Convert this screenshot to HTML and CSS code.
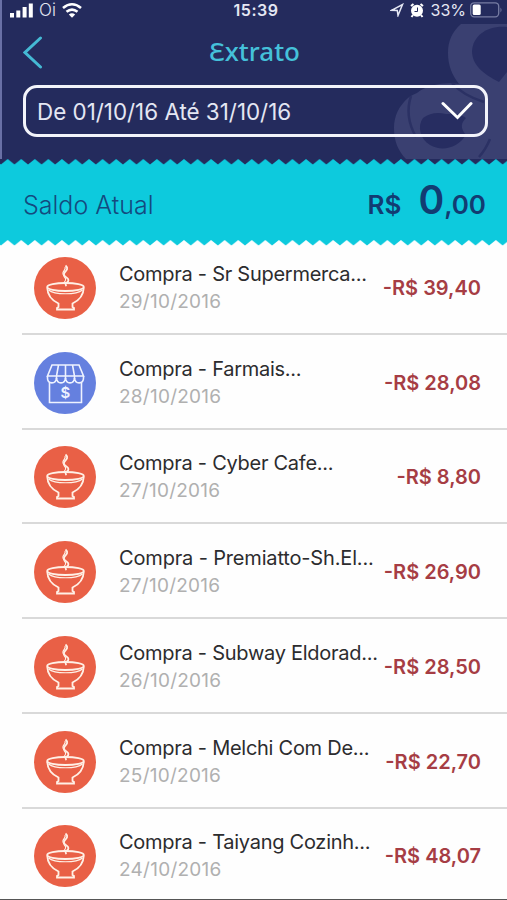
FILE: index.html
```html
<!DOCTYPE html>
<html lang="pt-BR">
<head>
	<meta charset="utf-8">
	<title>Extrato</title>
	<link rel="stylesheet" href="styles.css">
</head>
<body>
	<!-- bowl icon, used on most rows -->
	<svg class="defs">
		<symbol id="bowl" viewBox="0 0 62 62">
			<path d="M31.500 8.500c3 2.500 1.500 4.500-.5 6.500s-1 4 1.500 5.500 2.500 3.500.5 5-1.500 2.500-.5 3.500"/>
			<path class="thin" d="M31 10c1 2-1 3-2 5.500s1.500 4 2.500 6-1 3.500-2 5"/>
			<ellipse cx="31.500" cy="30" rx="18.300" ry="4"/>
			<path d="M13.200 30.500c.3 8 4.800 13 11.300 16v3.500l-1.500 1v1.500h17V51l-1.500-1v-3.500c6.500-3 11-8 11.300-16"/>
			<path class="thin" d="M14.500 33c6 5 28 5 34 0"/>
		</symbol>
	</svg>

	<div id="top">
		<svg class="mark" width="127" height="159" viewBox="380 0 127 159">
			<path class="ring" d="M507 24h-46c-9 8-13 17-13 29 0 12 4 22 11 31-12-2-31 0-42 9-4 2-7 3-9 5-9 8-14 18-14 30 0 13 4 23 12 31h101z"/>
			<path class="hole" d="M507 27c-19-2-34 8-35 24 0 14 11 23 27 31l8-10z"/>
			<path class="hole" d="M466 118c-8-6-15-4-20-4-9-2-16-1-23 4-6 8-3 21 7 27 12 7 28 3 36-10-6-7-5-12 0-17z"/>
			<path class="slit" d="M452 83c8 9 19 15 32 19M411 96c-4 12-3 27 5 41M490 139q-4 10-11 18"/>
		</svg>
		<div id="status">
			<div class="left">
				<svg width="24" height="16" viewBox="0 0 24 16"><path class="fill" d="M0 11h4v4.500H0zM6.300 8.500h4v7h-4zM12.600 5h4v10.500h-4zM18.800 1.500h4v14h-4z"/></svg>
				<span class="carrier">Oi</span>
				<svg width="22" height="16" viewBox="0 0 22 16"><path class="wifi" d="M2 6q9-7.500 18 0M5.500 9.800q5.500-4.500 11 0"/><path class="fill" d="M7.800 12.400q3.200-2.500 6.400 0L11 15.800z"/></svg>
			</div>
			<span class="time">15:39</span>
			<div class="right">
				<svg width="14" height="14" viewBox="0 0 14 14"><path class="gps" d="M1.500 7.300L12.500 1.500 8 12.500 7.300 7.500z"/></svg>
				<svg class="alarm" width="14" height="15" viewBox="0 0 14 15"><circle class="fill" cx="7" cy="7.700" r="6"/><path class="legs" d="M1 3l2.500-2M13 3l-2.500-2M3 12l-1.500 2M11 12l1.500 2"/><path class="hand" d="M7.500 4.500v4H4.500"/></svg>
				<span class="percent">33%</span>
				<svg width="32" height="16" viewBox="0 0 32 16"><rect class="battery" x=".7" y=".8" width="28" height="14" rx="3.500"/><rect class="fill" x="2.700" y="2.500" width="8" height="10.500" rx="1.500"/><path class="cap" d="M30.500 5.500q2 2.500 0 5z"/></svg>
			</div>
		</div>
		<div id="title">
			<svg class="back" width="20" height="33" viewBox="0 0 20 33"><path d="M17.500 2L2 16.500l15.500 14.500"/></svg>
			<h1>Ɛxtrato</h1>
		</div>
		<div id="period">
			<span>De 01/10/16 Até 31/10/16</span>
			<svg width="32" height="20" viewBox="0 0 32 20"><path d="M2 2.500l14.500 14L30 2.500"/></svg>
		</div>
	</div>

	<div id="saldo">
		<svg class="zigzag" width="507" height="6">
			<pattern id="teeth" x="7.700" width="13.560" height="6" patternUnits="userSpaceOnUse"><path d="M0 0L6.780 5.500 13.560 0v6H0z"/></pattern>
			<rect width="507" height="6" fill="url(#teeth)"/>
		</svg>
		<div class="row">
			<span class="label">Saldo Atual</span>
			<span class="valor"><span class="moeda">R$</span><span class="zero">0</span><span class="cents">,00</span></span>
		</div>
		<svg class="zigzag bottom" width="507" height="6">
			<pattern id="teeth2" x="7.700" width="13.560" height="6" patternUnits="userSpaceOnUse"><path d="M0 0L6.780 5.500 13.560 0v6H0z"/></pattern>
			<rect width="507" height="6" fill="url(#teeth2)"/>
		</svg>
	</div>

	<ul id="lista">
		<li>
			<svg class="icon food"><use href="#bowl"/></svg>
			<div class="info"><p class="nome">Compra - Sr Supermerca...</p><p class="data">29/10/2016</p></div>
			<span class="preco">-R$ 39,40</span>
		</li>
		<li>
			<svg class="icon shop" viewBox="0 0 62 62">
				<path d="M18 13h27l4.500 11H13.500zM24.500 13l-2 11v3M31.500 13v14M38.500 13l2 11v3M15.500 31v19.500h32V31"/>
				<path d="M13.500 24v2c0 6.500 8.500 6.500 9 0 .5 6.500 8.500 6.500 9 0 .5 6.500 8.500 6.500 9 0 .5 6.500 9 6.500 9 0v-2"/>
				<text x="31.500" y="45.500" text-anchor="middle">$</text>
			</svg>
			<div class="info"><p class="nome">Compra - Farmais...</p><p class="data">28/10/2016</p></div>
			<span class="preco">-R$ 28,08</span>
		</li>
		<li>
			<svg class="icon food"><use href="#bowl"/></svg>
			<div class="info"><p class="nome">Compra - Cyber Cafe...</p><p class="data">27/10/2016</p></div>
			<span class="preco">-R$ 8,80</span>
		</li>
		<li>
			<svg class="icon food"><use href="#bowl"/></svg>
			<div class="info"><p class="nome wide">Compra - Premiatto-Sh.El...</p><p class="data">27/10/2016</p></div>
			<span class="preco">-R$ 26,90</span>
		</li>
		<li>
			<svg class="icon food"><use href="#bowl"/></svg>
			<div class="info"><p class="nome">Compra - Subway Eldorad...</p><p class="data">26/10/2016</p></div>
			<span class="preco">-R$ 28,50</span>
		</li>
		<li>
			<svg class="icon food"><use href="#bowl"/></svg>
			<div class="info"><p class="nome">Compra - Melchi Com De...</p><p class="data">25/10/2016</p></div>
			<span class="preco">-R$ 22,70</span>
		</li>
		<li>
			<svg class="icon food"><use href="#bowl"/></svg>
			<div class="info"><p class="nome">Compra - Taiyang Cozinh...</p><p class="data">24/10/2016</p></div>
			<span class="preco">-R$ 48,07</span>
		</li>
	</ul>
</body>
</html>
```
FILE: styles.css
```css
*{
	padding: 0;
	margin: 0;
	box-sizing: border-box;
}
body{
	width: 507px;
	height: 900px;
	overflow: hidden;
	background-color: #fefefe;
	border-bottom: 1px solid #555;
	font-family: Inter, "Liberation Sans", sans-serif;
}
svg{
	display: block;
	flex: none;
	fill: none;
}
.defs{
	position: absolute;
	width: 0;
	height: 0;
}
#top{
	position: relative;
	height: 159px;
	background-color: #242b5d;
	color: #e4e7f3;
	border-left: 2px solid #6970a5;
}
.mark{
	position: absolute;
	top: 0;
	right: 0;
}
.ring{
	fill: #3a4071;
}
.hole{
	fill: #272d61;
}
.slit{
	stroke: #2b3164;
	stroke-width: 2.5;
}
#status{
	position: relative;
	display: grid;
	grid-template-columns: 1fr auto 1fr;
	align-items: center;
	height: 20px;
	padding: 0 5px 0 8px;
}
.left,
.right{
	display: flex;
	align-items: center;
}
.right{
	justify-content: flex-end;
}
.fill{
	fill: #fff;
}
.carrier{
	margin: 0 5px 0 5px;
	font-size: 17px;
	font-weight: 300;
}
.wifi{
	stroke: #fff;
	stroke-width: 2.6;
}
.time{
	font-size: 16px;
	font-weight: 600;
	letter-spacing: 0.5px;
}
.gps{
	stroke: #e4e7f3;
	stroke-width: 1.5;
}
.alarm{
	margin: 0 7px 0 6px;
}
.legs{
	stroke: #fff;
	stroke-width: 2;
}
.hand{
	stroke: #242b5d;
	stroke-width: 1;
}
.percent{
	margin-right: 4px;
	font-size: 16px;
}
.battery{
	stroke: #777da3;
	stroke-width: 1.3;
}
.cap{
	fill: #777da3;
}
#title{
	position: relative;
	display: grid;
	grid-template-columns: 1fr auto 1fr;
	align-items: center;
	height: 65px;
	padding-left: 21px;
	padding-right: 21px;
}
.back path{
	stroke: #45b9d4;
	stroke-width: 3;
	stroke-linecap: round;
}
h1{
	margin-top: -4px;
	color: #45c1da;
	font-family: "Noto Sans", sans-serif;
	font-size: 26px;
	font-weight: 500;
	line-height: 32px;
}
#period{
	position: relative;
	display: flex;
	justify-content: space-between;
	align-items: center;
	width: 465px;
	height: 52px;
	margin-left: 21px;
	padding: 0 12px 0 11px;
	border: 3px solid #f3f4fb;
	border-radius: 14px;
	font-size: 22.4px;
}
#period path{
	stroke: #fff;
	stroke-width: 3;
	stroke-linecap: round;
}
#saldo{
	height: 86px;
	background-color: #0dcadd;
	color: #144a7f;
}
.zigzag{
	background-color: #242b5d;
}
.zigzag path{
	fill: #0dcadd;
}
.bottom{
	background-color: #0dcadd;
}
.bottom path{
	fill: #fefefe;
}
#saldo .row{
	display: flex;
	justify-content: space-between;
	align-items: baseline;
	height: 75px;
	padding: 11px 21px 0 23px;
}
.label{
	font-size: 25px;
	font-weight: 300;
}
.valor{
	color: #123c72;
	font-size: 26px;
	font-weight: 600;
}
.zero{
	margin-left: 17px;
	font-size: 39px;
}
#lista{
	list-style: none;
	margin-left: 22px;
	margin-top: -5px;
}
#lista li{
	display: flex;
	align-items: center;
	height: 94.75px;
	padding: 3px 26px 0 12px;
	border-bottom: 2px solid #d9d9d9;
}
#lista li:last-child{
	border-bottom-color: transparent;
}
.icon{
	width: 62px;
	height: 62px;
	border-radius: 50%;
	stroke: #fff0e6;
	stroke-width: 1.8;
}
.thin{
	stroke-width: 1.2;
}
.food{
	background-color: #e96046;
}
.shop{
	background-color: #6580df;
	stroke: #eef2ff;
	stroke-width: 1.6;
}
.icon text{
	fill: #eef2ff;
	stroke: none;
	font-size: 15px;
	font-weight: 600;
}
.info{
	flex: 1;
	margin-left: 23px;
	white-space: nowrap;
}
.nome{
	color: #2c2c2e;
	font-size: 20px;
	line-height: 27px;
	letter-spacing: -0.27px;
}
.wide{
	letter-spacing: -0.16px;
}
.data{
	color: #b0b0b0;
	font-size: 19px;
	line-height: 27px;
	letter-spacing: 0.25px;
}
.preco{
	color: #a63d44;
	font-size: 20px;
	font-weight: 600;
	white-space: nowrap;
}
```
